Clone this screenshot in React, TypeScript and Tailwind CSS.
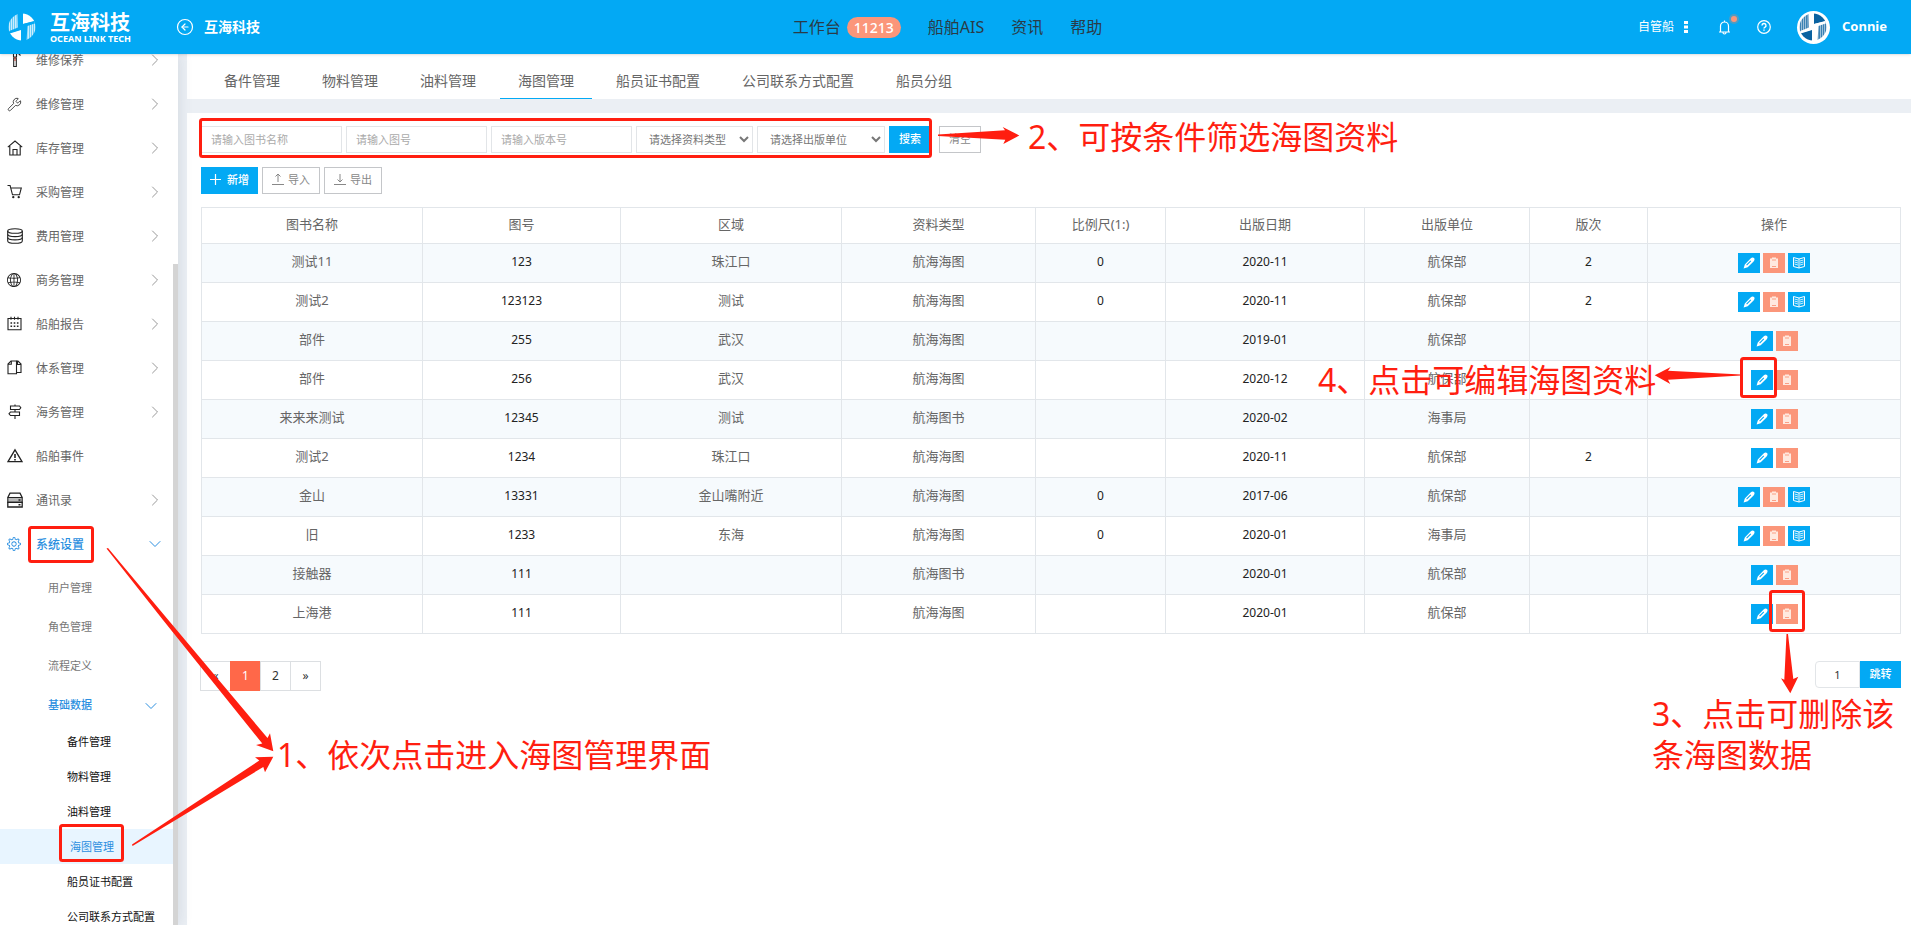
import React, { ReactNode, useState } from "react";
import clsx from "clsx";
import {
  ChevronDown,
  ChevronRight,
  CircleArrowLeft,
  Wrench,
} from "lucide-react";
import { SlGlobe, SlSettings } from "react-icons/sl";

interface IconProps {
  children: ReactNode;
}

const LineIcon: React.FC<IconProps> = ({ children }) => (
  <svg
    width="16"
    height="16"
    viewBox="0 0 16 16"
    fill="none"
    stroke="currentColor"
    strokeWidth="1.1"
  >
    {children}
  </svg>
);

const HammerIcon = () => (
  <LineIcon>
    <path d="M2.5 1.5h9l2 2M6.5 2v3h3V2" />
    <path d="M6.7 6h2.6v8.5H6.7z" />
    <path d="M8 5v4" stroke="#c0392b" />
  </LineIcon>
);

const HouseIcon = () => (
  <LineIcon>
    <path d="M.8 7.2 8 1l7.2 6.2M2.8 6v9h10.4V6" />
    <path d="M6 15V9.5h4V15" />
  </LineIcon>
);

const CartIcon = () => (
  <LineIcon>
    <path d="M.5 1.5h2.6l2.4 9.3h7L14.3 4H4" />
    <circle cx="6.3" cy="13.2" r=".6" fill="currentColor" />
    <circle cx="11.7" cy="13.2" r=".6" fill="currentColor" />
  </LineIcon>
);

const CoinsIcon = () => (
  <LineIcon>
    <ellipse cx="8" cy="3" rx="7.3" ry="2.3" />
    <path d="M.7 3v10c0 1.2 3.2 2.3 7.3 2.3s7.3-1.1 7.3-2.3V3" />
    <path d="M.7 6.3c0 1.2 3.2 2.3 7.3 2.3s7.3-1.1 7.3-2.3M.7 9.6c0 1.2 3.2 2.3 7.3 2.3s7.3-1.1 7.3-2.3" />
  </LineIcon>
);

const CalendarIcon = () => (
  <LineIcon>
    <path d="M1 2.5h13v11.3H1zM4 .8v3M7.5.8v3M11 .8v3" />
    <path d="M3.5 7h8.5M3.5 10.3h8.5" strokeDasharray="1.6 1.6" strokeWidth="1.6" />
  </LineIcon>
);

const FilesIcon = () => (
  <LineIcon>
    <path d="M9.5 13.8H1V4l3-3h5.5z" />
    <path d="M4.3 1v3.2H1M9.5 1H11l3 3v8.5H9.5M10.5 1v3.5H14" />
  </LineIcon>
);

const SignpostIcon = () => (
  <LineIcon>
    <path d="M3.5 2h9l1.3 1.7-1.3 1.8h-9zM12.5 8h-9L2 9.8l1.5 1.7h9zM8 .5V2M8 5.5V8M8 11.5V15" />
  </LineIcon>
);

const WarningIcon = () => (
  <LineIcon>
    <path d="M8 1.8 15 13.6H1z" strokeWidth="1.3" />
    <path d="M8 6v4M8 11v1.4" strokeWidth="1.6" />
  </LineIcon>
);

const ContactsIcon = () => (
  <LineIcon>
    <path d="M.8 5.5 3 1.2h10l2.200 4.300" strokeWidth="1.3" />
    <path d="M.8 5.5h14.400v4.900H.8z" fill="#bbb" />
    <path d="M.8 10.4h14.400v4.600H.8z" strokeWidth="1.3" />
    <path d="M11.500 8h2M11.500 12.700h2" strokeWidth="1.6" />
  </LineIcon>
);

interface EmblemProps {
  size: number;
  ink: string;
  paper: string;
  id: string;
}

const Emblem: React.FC<EmblemProps> = ({ size, ink, paper, id }) => (
  <svg width={size} height={size} viewBox="0 0 28 28">
    <defs>
      <clipPath id={id}>
        <circle cx="14" cy="14" r="13.5" />
      </clipPath>
    </defs>
    <g clipPath={`url(#${id})`}>
      <rect width="28" height="28" fill={paper} />
      <path d="M15 0h13v8L15 11z" fill={ink} />
      <path d="M13 28H0v-7.500l13-4z" fill={ink} />
      <path
        d="M1.2 0v19M3.200 0v19M5.200 0v18M7.200 0v17M9 0v16"
        stroke={ink}
        strokeWidth="1.2"
      />
      <path
        d="M26.800 9v19M24.800 10v18M22.800 11v17M20.800 12v16M19 12v16"
        stroke={ink}
        strokeWidth="1.2"
      />
      <path
        d="M9.500 0H15v11l13-3.500V10l-8.500 3L18.500 28H13V17L0 21v-2.500L10 14.500z"
        fill={paper}
      />
    </g>
  </svg>
);

const PencilIcon = () => (
  <svg width="12" height="12" viewBox="0 0 12 12">
    <path
      fill="#fff"
      fillRule="evenodd"
      d="M.6 11.4 1.8 7.6 7.6 1.5C8.8.3 10.2.2 11 1c.9.9.7 2.2-.4 3.4L4.7 10.2zM4 8.6l4.2-4.3-.8-.8-4.200 4.300z"
    />
  </svg>
);

const ClipboardIcon = () => (
  <svg width="12" height="12" viewBox="0 0 12 12">
    <path fill="#ffe9df" d="M2 1.5h2v-1h4v1h2v9.500H2z" />
    <path d="M4 3h4M4 9.500h4" stroke="#fb967a" strokeWidth=".9" />
  </svg>
);

const BookIcon = () => (
  <svg width="14" height="14" viewBox="0 0 14 14" fill="none" stroke="#fff">
    <path d="M1.500 1.500 7 3l5.500-1.500v9L7 12l-5.500-1.500zM7 3v9" />
    <path
      d="m2.500 4 3.500 1M2.500 6 6 7M2.500 8 6 9M11.500 4 8 5M11.500 6 8 7M11.500 8 8 9"
      strokeWidth=".8"
    />
  </svg>
);

const ArrowLineIcon = ({ up }: { up?: boolean }) => (
  <svg
    width="12"
    height="13"
    viewBox="0 0 12 13"
    fill="none"
    stroke="currentColor"
    className="mb-0.5"
  >
    <path d={up ? "M6 9V1M3.5 3.5 6 1l2.5 2.5" : "M6 1v8M3.5 6.5 6 9l2.5-2.5"} />
    <path d="M0 11.5h12" />
  </svg>
);

const menuItems = [
  { label: "维修保养", icon: <HammerIcon />, arrow: true },
  { label: "维修管理", icon: <Wrench size={15} strokeWidth={1.3} />, arrow: true },
  { label: "库存管理", icon: <HouseIcon />, arrow: true },
  { label: "采购管理", icon: <CartIcon />, arrow: true },
  { label: "费用管理", icon: <CoinsIcon />, arrow: true },
  { label: "商务管理", icon: <SlGlobe size={14} />, arrow: true },
  { label: "船舶报告", icon: <CalendarIcon />, arrow: true },
  { label: "体系管理", icon: <FilesIcon />, arrow: true },
  { label: "海务管理", icon: <SignpostIcon />, arrow: true },
  { label: "船舶事件", icon: <WarningIcon />, arrow: false },
  { label: "通讯录", icon: <ContactsIcon />, arrow: true },
];

const subItems = ["用户管理", "角色管理", "流程定义"];

const baseItems = [
  "备件管理",
  "物料管理",
  "油料管理",
  "海图管理",
  "船员证书配置",
  "公司联系方式配置",
];

const tabs = [
  "备件管理",
  "物料管理",
  "油料管理",
  "海图管理",
  "船员证书配置",
  "公司联系方式配置",
  "船员分组",
];

const columns = [
  { title: "图书名称", width: "w-[221px]" },
  { title: "图号", width: "w-[198px]" },
  { title: "区域", width: "w-[221px]" },
  { title: "资料类型", width: "w-[194px]" },
  { title: "比例尺(1:)", width: "w-[130px]" },
  { title: "出版日期", width: "w-[199px]" },
  { title: "出版单位", width: "w-[165px]" },
  { title: "版次", width: "w-[118px]" },
  { title: "操作", width: "w-[253px]" },
];

const rows = [
  ["测试11", "123", "珠江口", "航海海图", "0", "2020-11", "航保部", "2"],
  ["测试2", "123123", "测试", "航海海图", "0", "2020-11", "航保部", "2"],
  ["部件", "255", "武汉", "航海海图", "", "2019-01", "航保部", ""],
  ["部件", "256", "武汉", "航海海图", "", "2020-12", "航保部", ""],
  ["来来来测试", "12345", "测试", "航海图书", "", "2020-02", "海事局", ""],
  ["测试2", "1234", "珠江口", "航海海图", "", "2020-11", "航保部", "2"],
  ["金山", "13331", "金山嘴附近", "航海海图", "0", "2017-06", "航保部", ""],
  ["旧", "1233", "东海", "航海海图", "0", "2020-01", "海事局", ""],
  ["接触器", "111", "", "航海图书", "", "2020-01", "航保部", ""],
  ["上海港", "111", "", "航海海图", "", "2020-01", "航保部", ""],
];

const Header = () => (
  <header className="relative z-10 flex h-[54px] shrink-0 items-center bg-[#03a9f4] px-2 text-white shadow-sm">
    <div className="flex flex-1 items-center">
      <Emblem size={28} ink="#fff" paper="#03a9f4" id="logo" />
      <div className="ml-3.5 flex w-20 flex-col whitespace-nowrap font-bold">
        <span className="text-[20px] leading-[22px]">互海科技</span>
        <span className="text-[9px] leading-[9px]">OCEAN LINK TECH</span>
      </div>
      <button aria-label="返回" className="ml-[46px]">
        <CircleArrowLeft size={18} strokeWidth={1.6} />
      </button>
      <span className="ml-2.5 text-sm font-bold">互海科技</span>
    </div>
    <nav className="flex items-center gap-[27px] text-base text-[#2a3b47]">
      <a href="#workbench" className="flex items-center gap-1.5">
        工作台
        <span className="rounded-full bg-[#fb967a] px-[7px] text-sm font-medium leading-[21px] text-white">
          11213
        </span>
      </a>
      <a href="#ais">船舶AIS</a>
      <a href="#news">资讯</a>
      <a href="#help">帮助</a>
    </nav>
    <div className="flex flex-1 items-center justify-end pr-4">
      <button className="flex items-center gap-2.5 text-xs">
        自管船
        <svg width="4" height="14" viewBox="0 0 4 14" fill="#fff">
          <path d="M0 1h4v3H0zM0 5.5h4v3H0zM0 10h4v3H0z" />
        </svg>
      </button>
      <button aria-label="通知" className="relative ml-[30px]">
        <svg
          width="13"
          height="15"
          viewBox="0 0 13 15"
          fill="none"
          stroke="#fff"
          strokeWidth="1.2"
        >
          <path d="M1 12h11M2.5 12V6a4 4 0 0 1 8 0v6M5 12.5a1.5 1.5 0 0 0 3 0M6.5 2V.5" />
        </svg>
        <span className="absolute -right-2 -top-1.5 flex size-2.5 items-center justify-center rounded-full bg-[#4f9dc4]">
          <span className="size-1.5 rounded-full bg-[#fb967a]" />
        </span>
      </button>
      <button aria-label="帮助" className="ml-[26px]">
        <svg
          width="14"
          height="14"
          viewBox="0 0 14 14"
          fill="none"
          stroke="#fff"
          strokeWidth="1.2"
        >
          <circle cx="7" cy="7" r="6.3" />
          <path d="M5 5.500a2 2 0 1 1 2.800 1.800c-.6.3-.8.6-.8 1.200M7 9.500v1.300" strokeWidth="1.4" />
        </svg>
      </button>
      <span className="ml-[26px] flex size-[33px] items-center justify-center rounded-full bg-white">
        <Emblem size={28} ink="#0a62a0" paper="#fff" id="avatar" />
      </span>
      <span className="ml-3 text-[13px] font-bold">Connie</span>
    </div>
  </header>
);

const Sidebar = () => (
  <aside className="relative w-[178px] shrink-0 overflow-hidden bg-white shadow-[0_0_14px_rgba(60,80,110,0.15)]">
    <nav className="-mt-4 w-[173px] whitespace-nowrap">
      {menuItems.map((item) => (
        <a
          key={item.label}
          href="#menu"
          className="flex h-11 items-center pl-[7px] pr-2 text-xs text-[#666]"
        >
          <span className="flex w-[29px] text-[#222]">{item.icon}</span>
          <span className="flex-1 pt-0.5">{item.label}</span>
          {item.arrow && (
            <ChevronRight size={20} strokeWidth={1.2} className="text-[#999]" />
          )}
        </a>
      ))}
      <a
        href="#settings"
        className="flex h-11 items-center pl-[7px] pr-2 text-xs font-medium text-[#2b8fe0]"
      >
        <span className="flex w-[29px]">
          <SlSettings size={14} />
        </span>
        <span className="flex-1 pt-0.5">系统设置</span>
        <ChevronDown size={20} strokeWidth={1.2} />
      </a>
      <div className="pt-0.5 text-[11px]">
        {subItems.map((label) => (
          <a
            key={label}
            href="#sub"
            className="flex h-[39px] items-center pl-12 pt-0.5 text-[#777]"
          >
            {label}
          </a>
        ))}
        <a
          href="#base"
          className="flex h-[39px] items-center justify-between pl-12 pr-3 pt-0.5 font-medium text-[#2b8fe0]"
        >
          基础数据
          <ChevronDown size={20} strokeWidth={1.2} />
        </a>
        {baseItems.map((label) => (
          <a
            key={label}
            href="#chart"
            className={clsx(
              "flex h-[35px] items-center pt-0.5",
              label === "海图管理"
                ? "bg-[#e8f5ff] pl-[70px] text-[#2b8fe0]"
                : "pl-[67px] text-[#111]"
            )}
          >
            {label}
          </a>
        ))}
      </div>
    </nav>
    <div className="absolute bottom-0 right-0 top-[210px] w-[5px] bg-[#d4d4d4]" />
  </aside>
);

const Filters = () => {
  const inputStyle =
    "h-[27px] w-[141px] border border-[#e2e5e8] px-[9px] placeholder:text-[#aaa] outline-none";
  const selectStyle =
    "h-[27px] border border-[#e2e5e8] bg-white px-2 text-[#777] outline-none";

  return (
    <form
      className="flex items-center gap-1 text-[11px]"
      onSubmit={(e) => e.preventDefault()}
    >
      <input className={inputStyle} aria-label="图书名称" placeholder="请输入图书名称" />
      <input className={inputStyle} aria-label="图号" placeholder="请输入图号" />
      <input className={inputStyle} aria-label="版本号" placeholder="请输入版本号" />
      <select aria-label="资料类型" className={clsx(selectStyle, "w-[117px]")}>
        <option>请选择资料类型</option>
        <option>航海海图</option>
        <option>航海图书</option>
      </select>
      <select aria-label="出版单位" className={clsx(selectStyle, "w-[128px]")}>
        <option>请选择出版单位</option>
        <option>航保部</option>
        <option>海事局</option>
      </select>
      <button className="h-[27px] w-[42px] bg-[#03a9f4] font-medium text-white">
        搜索
      </button>
      <button
        type="reset"
        className="ml-1 h-[27px] w-[42px] border border-[#c4c6c9] text-[#888]"
      >
        清空
      </button>
    </form>
  );
};

const ChartTable = () => (
  <table className="mt-[13px] w-full table-fixed border-collapse text-center text-[13px] text-[#666]">
    <thead>
      <tr className="h-9">
        {columns.map((col) => (
          <th
            key={col.title}
            className={clsx(
              "border border-[#e2e6ea] p-0 pb-0.5 font-normal",
              col.width
            )}
          >
            {col.title}
          </th>
        ))}
      </tr>
    </thead>
    <tbody>
      {rows.map((row, i) => (
        <tr key={i} className="h-[39px] odd:bg-[#f6fafd]">
          {row.map((cell, j) => (
            <td
              key={j}
              className={clsx(
                "border border-[#e2e6ea] p-0 pb-0.5",
                /^[\d-]+$/.test(cell) && "text-xs text-[#222]"
              )}
            >
              {cell}
            </td>
          ))}
          <td className="border border-[#e2e6ea] p-0">
            <div className="flex justify-center gap-[3px]">
              <button
                aria-label="编辑"
                className="flex h-5 w-[22px] items-center justify-center bg-[#03a9f4]"
              >
                <PencilIcon />
              </button>
              <button
                aria-label="删除"
                className="flex h-5 w-[22px] items-center justify-center bg-[#fb967a]"
              >
                <ClipboardIcon />
              </button>
              {row[4] === "0" && (
                <button
                  aria-label="查看"
                  className="flex h-5 w-[22px] items-center justify-center bg-[#03a9f4]"
                >
                  <BookIcon />
                </button>
              )}
            </div>
          </td>
        </tr>
      ))}
    </tbody>
  </table>
);

const Pagination = () => {
  const [page, setPage] = useState("1");
  const pageStyle = "-ml-px h-[30px] w-[31px] border border-[#dcdfe2]";

  return (
    <div className="mt-[27px] flex items-start justify-between text-xs text-[#333]">
      <div className="flex">
        <button className={pageStyle}>«</button>
        <button className="-ml-px h-[30px] w-[31px] bg-[#ff6849] text-white">1</button>
        <button className={pageStyle}>2</button>
        <button className={pageStyle}>»</button>
      </div>
      <form className="flex text-[11px]" onSubmit={(e) => e.preventDefault()}>
        <input
          aria-label="页码"
          className="h-[27px] w-[45px] rounded-l border border-[#e2e5e8] text-center"
          value={page}
          onChange={(e) => setPage(e.target.value)}
        />
        <button className="h-[27px] w-[41px] bg-[#03a9f4] font-medium text-white">
          跳转
        </button>
      </form>
    </div>
  );
};

// step-by-step guide drawn over the page
const Guide = () => (
  <div className="pointer-events-none absolute inset-0 z-20 text-[32px] leading-[41px] text-[#ff1e10]">
    <svg className="absolute inset-0 size-full">
      <g fill="none" stroke="#ff1e10" strokeWidth="3">
        <rect x="200.5" y="119.5" width="730" height="37" rx="2" />
        <rect x="29.5" y="527.5" width="63" height="34" rx="2" />
        <rect x="60.5" y="825.5" width="62" height="35" rx="2" />
        <rect x="1741.5" y="358.5" width="34" height="38" rx="2" />
        <rect x="1770.5" y="591.5" width="33" height="39" rx="2" />
      </g>
      <g fill="#ff1e10">
        <path d="M938 134.5 1005 130.3 1002.7 127 1019.3 135.5 1003.3 144 1005.3 139.8 938 136z" />
        <path d="M1741 374.5 1668 370.7 1670.7 367 1654.7 375.3 1670.3 384 1668 379.7 1741 375.5z" />
        <path d="M1786.5 634h1.5L1793.3 679 1798.3 676.7 1790.3 693.3 1781 678.3 1784.3 679.7z" />
        <path d="M106.5 548.5 108 548 168.3 620 267.5 738 270 733.3 273.3 751.3 256 745 262.3 743.5 163 620z" />
        <path d="M132 844.5 259.3 760.5 255 757.3 273.3 756.7 265 772.3 263.3 767 132.5 846z" />
      </g>
    </svg>
    <p className="absolute left-[277px] top-[734px] whitespace-nowrap">
      1、依次点击进入海图管理界面
    </p>
    <p className="absolute left-[1028px] top-[116px] whitespace-nowrap">
      2、可按条件筛选海图资料
    </p>
    <p className="absolute left-[1652px] top-[693px] w-[250px]">
      3、点击可删除该条海图数据
    </p>
    <p className="absolute left-[1318px] top-[359px] whitespace-nowrap">
      4、点击可编辑海图资料
    </p>
  </div>
);

const App: React.FC = () => {
  const [activeTab, setActiveTab] = useState("海图管理");

  return (
    <div className="relative flex h-screen flex-col overflow-hidden bg-[#ebeff4] font-['Noto_Sans','Noto_Sans_CJK_SC',sans-serif]">
      <Header />
      <div className="flex min-h-0 flex-1">
        <Sidebar />
        <main className="ml-[9px] flex min-w-0 flex-1 flex-col gap-3.5">
          <div className="flex h-[45px] gap-1.5 bg-white pl-[19px]">
            {tabs.map((tab) => (
              <button
                key={tab}
                onClick={() => setActiveTab(tab)}
                className={clsx(
                  "border-b px-[18px] pt-2.5 text-sm text-[#666]",
                  tab === activeTab ? "border-[#03a9f4]" : "border-transparent"
                )}
              >
                {tab}
              </button>
            ))}
          </div>
          <section className="flex-1 bg-white pb-4 pl-3.5 pr-2.5 pt-[13px]">
            <Filters />
            <div className="mt-3.5 flex gap-1 text-[11px] text-[#888]">
              <button className="flex h-[27px] w-[57px] items-center justify-center gap-1.5 bg-[#03a9f4] font-medium text-white">
                <svg
                  width="11"
                  height="11"
                  viewBox="0 0 11 11"
                  stroke="#fff"
                  strokeWidth="1.2"
                  className="mb-0.5"
                >
                  <path d="M5.5 0v11M0 5.5h11" />
                </svg>
                新增
              </button>
              <button className="flex h-[27px] w-[58px] items-center justify-center gap-1 border border-[#c4c6c9]">
                <ArrowLineIcon up />
                导入
              </button>
              <button className="flex h-[27px] w-[58px] items-center justify-center gap-1 border border-[#c4c6c9]">
                <ArrowLineIcon />
                导出
              </button>
            </div>
            <ChartTable />
            <Pagination />
          </section>
        </main>
      </div>
      <Guide />
    </div>
  );
};

export default App;
